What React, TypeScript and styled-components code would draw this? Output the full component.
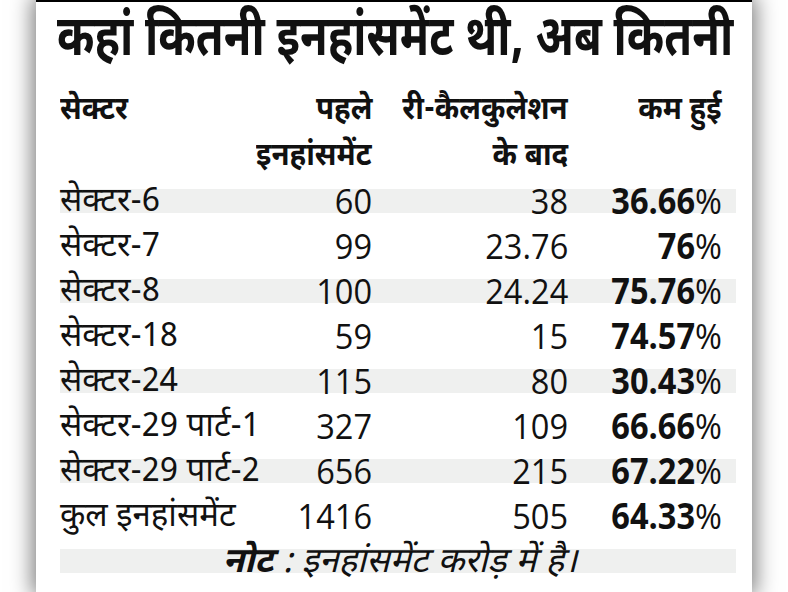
import React, { useLayoutEffect, useRef, useState } from 'react';
import styled, { createGlobalStyle } from 'styled-components';

const GlobalStyle = createGlobalStyle`
  html, body {
    margin: 0;
    padding: 0;
    background: #ffffff;
  }
  body {
    font-family: "Noto Sans Devanagari", "Lohit Devanagari", "FreeSans", "Noto Sans", sans-serif;
    color: #111;
  }
`;

const Page = styled.div`
  width: 788px;
  height: 592px;
  overflow: hidden;
  display: flex;
  background: #ffffff;
`;

const Panel = styled.div`
  margin-left: 36px;
  width: 716px;
  height: 592px;
  background: #ffffff;
  border-top: 2px solid #000;
  box-shadow: 0 0 20px 4px rgba(0, 0, 0, 0.5);
  padding: 0 16px 0 24px;
  box-sizing: border-box;
  display: flex;
  flex-direction: column;
`;

const Title = styled.h1`
  margin: 0 0 0 -3px;
  height: 86px;
  font-size: 56px;
  font-weight: 700;
  line-height: 80px;
  white-space: nowrap;
`;

// squeezes text horizontally, the way the condensed newspaper type looks
const Squeeze = styled.span<{ $x: number; $origin?: 'left' | 'right' | 'center' }>`
  display: inline-block;
  white-space: nowrap;
  transform: scaleX(${(p) => p.$x});
  transform-origin: ${(p) => p.$origin || 'right'} center;
`;

const COLUMNS = '184px 128px 196px 154px 14px';

const Grid = styled.div`
  display: grid;
  grid-template-columns: ${COLUMNS};
`;

const HeadCell = styled.div<{ $align?: 'left' | 'right' }>`
  font-size: 32px;
  font-weight: 700;
  line-height: 46px;
  text-align: ${(p) => p.$align || 'right'};
  white-space: nowrap;
`;

const Row = styled.div<{ $striped?: boolean }>`
  display: grid;
  grid-template-columns: ${COLUMNS};
  height: 45px;
  align-items: end;
  background: ${(p) =>
    p.$striped
      ? 'linear-gradient(to bottom, transparent 0, transparent 9px, #eff0ef 9px, #eff0ef 33px, transparent 33px)'
      : 'transparent'};
`;

const Label = styled.div`
  font-size: 33px;
  line-height: 40px;
  white-space: nowrap;
  padding-bottom: 2px;
`;

const Num = styled.div<{ $bold?: boolean }>`
  font-family: "Open Sans", "Noto Sans", sans-serif;
  font-size: 35px;
  line-height: 40px;
  text-align: right;
  font-weight: ${(p) => (p.$bold ? 700 : 400)};
  white-space: nowrap;
  padding-bottom: 4px;
`;

const Pct = styled.span`
  font-weight: 400;
`;

const Note = styled.div`
  grid-column: 1 / span 5;
  text-align: center;
  font-size: 35px;
  line-height: 40px;
  font-style: italic;
  padding: 0 0 1px 4px;
  b {
    font-weight: 700;
  }
`;

type Item = { name: string; before: string; after: string; cut: string };

const rows: Item[] = [
  { name: 'सेक्टर-6', before: '60', after: '38', cut: '36.66' },
  { name: 'सेक्टर-7', before: '99', after: '23.76', cut: '76' },
  { name: 'सेक्टर-8', before: '100', after: '24.24', cut: '75.76' },
  { name: 'सेक्टर-18', before: '59', after: '15', cut: '74.57' },
  { name: 'सेक्टर-24', before: '115', after: '80', cut: '30.43' },
  { name: 'सेक्टर-29 पार्ट-1', before: '327', after: '109', cut: '66.66' },
  { name: 'सेक्टर-29 पार्ट-2', before: '656', after: '215', cut: '67.22' },
  { name: 'कुल इनहांसमेंट', before: '1416', after: '505', cut: '64.33' },
];

const TITLE_WIDTH = 676;
const NUM_SQUEEZE = 0.93;
const HEAD_SQUEEZE = 0.92;

function FitTitle({ children }: { children: React.ReactNode }) {
  const ref = useRef<HTMLSpanElement>(null);
  const [scale, setScale] = useState(0.75);
  useLayoutEffect(() => {
    if (ref.current) {
      const w = ref.current.offsetWidth;
      if (w > 0) setScale(TITLE_WIDTH / w);
    }
  }, []);
  return (
    <Title>
      <Squeeze ref={ref} $x={scale} $origin="left">
        {children}
      </Squeeze>
    </Title>
  );
}

export default function App() {
  return (
    <>
      <GlobalStyle />
      <Page>
        <Panel>
          <FitTitle>कहां कितनी इनहांसमेंट थी, अब कितनी</FitTitle>
          <Grid>
            <HeadCell $align="left">
              <Squeeze $x={HEAD_SQUEEZE} $origin="left">सेक्टर</Squeeze>
            </HeadCell>
            <HeadCell>
              <Squeeze $x={HEAD_SQUEEZE}>पहले</Squeeze>
              <br />
              <Squeeze $x={HEAD_SQUEEZE}>इनहांसमेंट</Squeeze>
            </HeadCell>
            <HeadCell>
              <Squeeze $x={HEAD_SQUEEZE}>री-कैलकुलेशन</Squeeze>
              <br />
              <Squeeze $x={HEAD_SQUEEZE}>के बाद</Squeeze>
            </HeadCell>
            <HeadCell>
              <Squeeze $x={HEAD_SQUEEZE}>कम हुई</Squeeze>
            </HeadCell>
            <div />
          </Grid>
          {rows.map((r, i) => (
            <Row key={r.name} $striped={i % 2 === 0}>
              <Label>{r.name}</Label>
              <Num>
                <Squeeze $x={NUM_SQUEEZE}>{r.before}</Squeeze>
              </Num>
              <Num>
                <Squeeze $x={NUM_SQUEEZE}>{r.after}</Squeeze>
              </Num>
              <Num $bold>
                <Squeeze $x={NUM_SQUEEZE}>
                  {r.cut}
                  <Pct>%</Pct>
                </Squeeze>
              </Num>
              <div />
            </Row>
          ))}
          <Row $striped>
            <Note>
              <b>नोट</b> : इनहांसमेंट करोड़ में है।
            </Note>
          </Row>
        </Panel>
      </Page>
    </>
  );
}
